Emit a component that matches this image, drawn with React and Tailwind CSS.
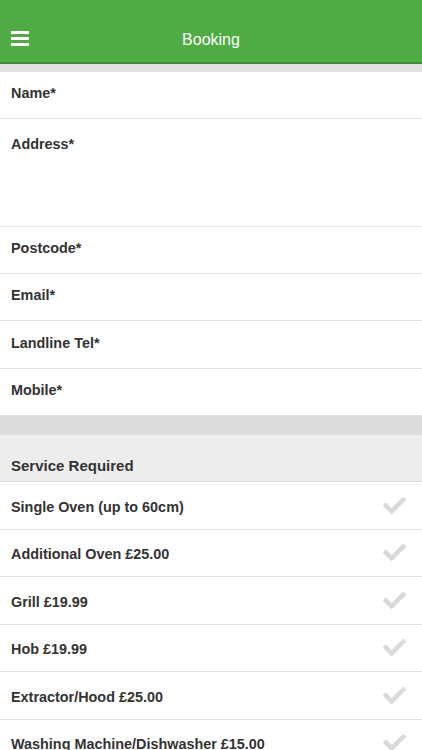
export default function App() {
  const contactFields = [
    { label: "Name*", height: "h-[47px]" },
    { label: "Address*", height: "h-[108px]", top: true },
    { label: "Postcode*", height: "h-[47px]" },
    { label: "Email*", height: "h-[47px]" },
    { label: "Landline Tel*", height: "h-[48px]" },
    { label: "Mobile*", height: "h-[47px]" },
  ];

  const services = [
    "Single Oven (up to 60cm)",
    "Additional Oven £25.00",
    "Grill £19.99",
    "Hob £19.99",
    "Extractor/Hood £25.00",
    "Washing Machine/Dishwasher £15.00",
  ];

  return (
    <div className="w-[422px] h-[750px] overflow-hidden bg-white font-['Liberation_Sans',Arial,sans-serif]">
      {/* Top bar */}
      <div className="h-[64px] bg-[#4fab43] border-b-2 border-[#3f8c36] flex items-center relative">
        <div className="absolute left-[11px] top-[31px] flex flex-col gap-[3px]">
          <span className="block w-[18px] h-[3px] bg-white" />
          <span className="block w-[18px] h-[3px] bg-white" />
          <span className="block w-[18px] h-[3px] bg-white" />
        </div>
        <div className="flex-1 text-center text-white text-[16px] pt-[18px]">Booking</div>
      </div>
      <div className="h-[8px] bg-[#e1e1e1]" />

      {/* Contact details */}
      {contactFields.map((f) => (
        <div
          key={f.label}
          className={`${f.height} border-b border-[#e3e3e3] flex ${f.top ? "items-start pt-[15px]" : "items-center"} px-[11px]`}
        >
          <span className="text-[14.4px] font-bold text-[#333] mb-[2px]">{f.label}</span>
        </div>
      ))}

      <div className="h-[19px] bg-[#dcdcdc]" />
      <div className="h-[47px] bg-[#ededed] border-b border-[#dcdcdc] flex items-center px-[11px] pt-[16px]">
        <span className="text-[15px] font-bold text-[#333]">Service Required</span>
      </div>

      {services.map((s) => (
        <div key={s} className="h-[47.5px] border-b border-[#e3e3e3] flex items-center justify-between pl-[11px] pr-[16px]">
          <span className="text-[14.4px] font-bold text-[#333] mt-[5px]">{s}</span>
          <svg viewBox="0 0 512 512" className="w-[23px] h-[23px]" fill="#dadada">
            <path d="M173.898 439.404l-166.4-166.4c-9.997-9.997-9.997-26.206 0-36.204l36.203-36.204c9.997-9.998 26.207-9.998 36.204 0L192 312.69 432.095 72.596c9.997-9.997 26.207-9.997 36.204 0l36.203 36.204c9.997 9.997 9.997 26.206 0 36.204l-294.4 294.401c-9.998 9.997-26.207 9.997-36.204-.001z" />
          </svg>
        </div>
      ))}
    </div>
  );
}
